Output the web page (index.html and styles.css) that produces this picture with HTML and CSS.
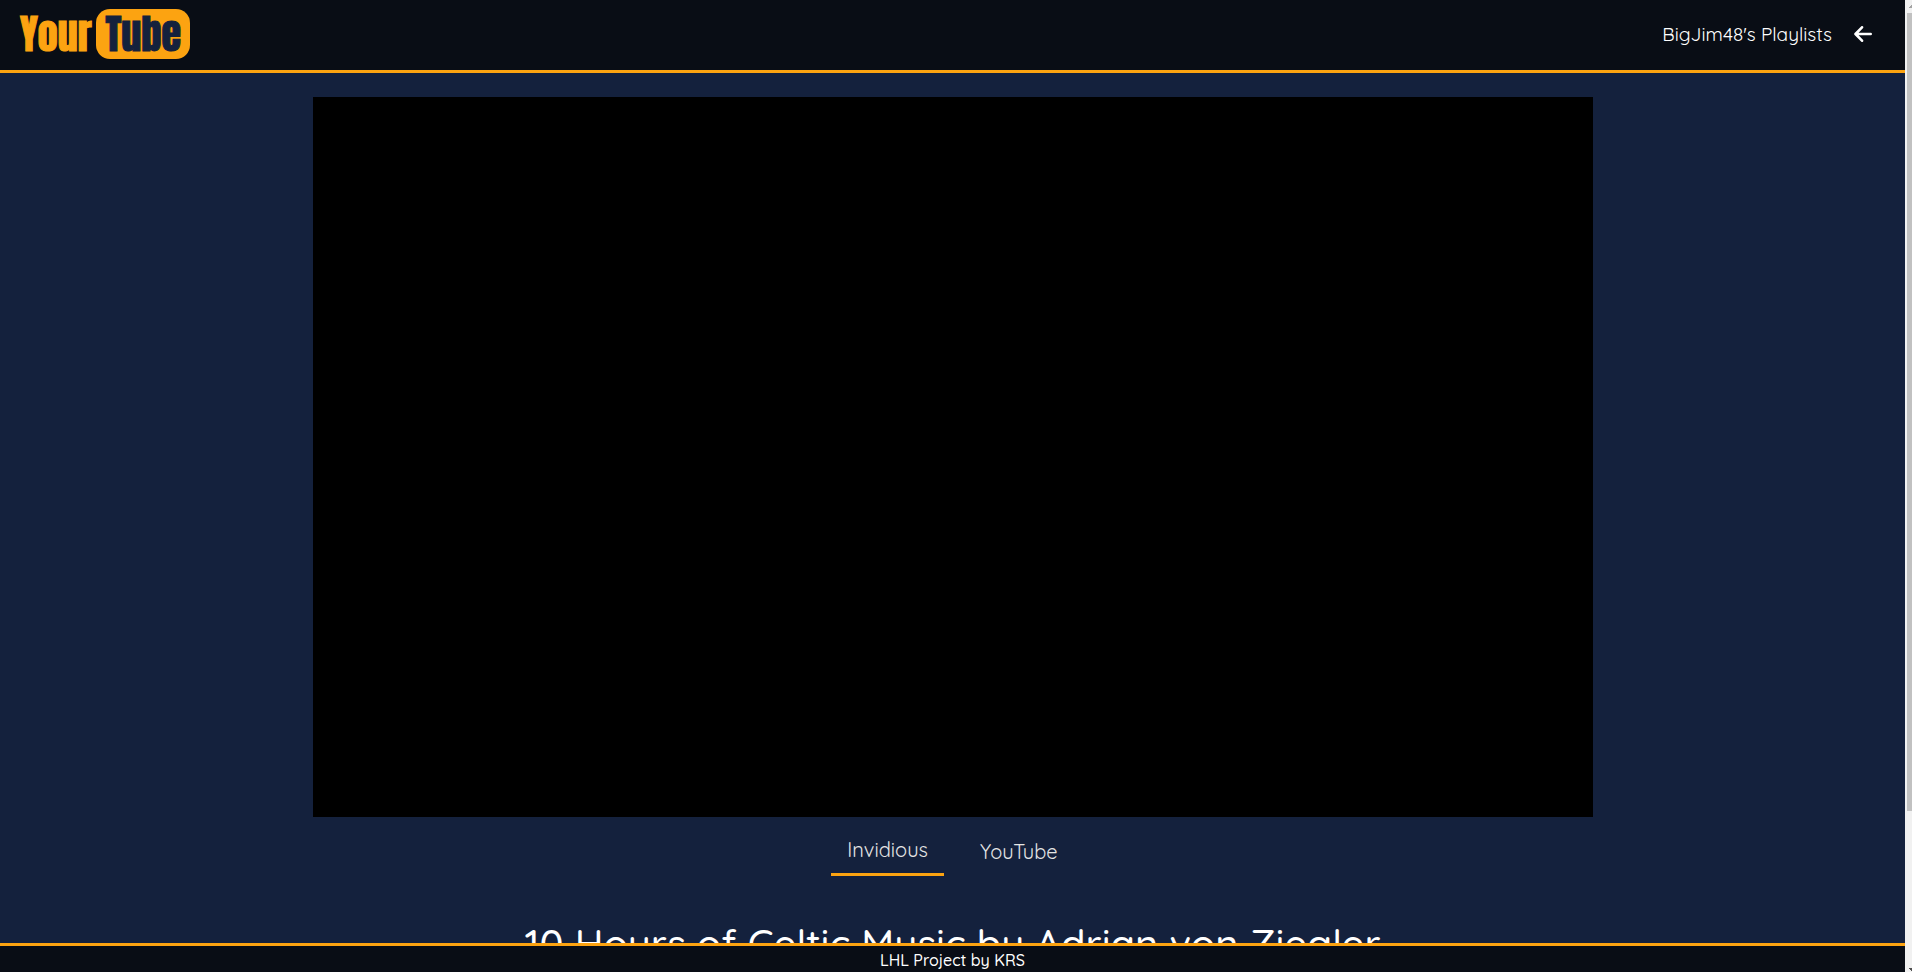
FILE: index.html
```html
<!DOCTYPE html>
<html lang="en">
<head>
  <meta charset="utf-8">
  <meta name="viewport" content="width=device-width, initial-scale=1">
  <title>YourTube</title>
  <link rel="stylesheet" href="styles.css">
</head>
<body>
  <div class="app">
    <header class="topbar">
      <a class="logo" href="#" aria-label="YourTube home"><span class="logo-your">Your</span><span class="logo-tube">Tube</span></a>
      <nav class="topnav">
        <a class="playlists" href="#">BigJim48's Playlists</a>
        <a class="back" href="#" aria-label="Back">
          <svg viewBox="0 0 18 16" width="18" height="16" aria-hidden="true"><path d="M8 1.3 1.5 8 8 14.7M2 8h14.7" fill="none" stroke="currentColor" stroke-width="2.6" stroke-linecap="round" stroke-linejoin="round"/></svg>
        </a>
      </nav>
    </header>
    <main class="content">
      <div class="player"></div>
      <div class="tabs">
        <button class="tab tab-active" type="button">Invidious</button>
        <button class="tab" type="button">YouTube</button>
      </div>
      <h1 class="title">10 Hours of Celtic Music by Adrian von Ziegler</h1>
    </main>
    <footer class="footer">LHL Project by KRS</footer>
  </div>
  <div class="scrollbar" aria-hidden="true">
    <svg class="arrow" viewBox="0 0 5 13" width="5" height="13"><path d="M2 8V7h1V6h1V5h1v3z" fill="#a3a3a3"/></svg>
    <div class="thumb"></div>
    <div class="track"></div>
    <svg class="arrow" viewBox="0 0 5 13" width="5" height="13"><path d="M2 9h3v3H4v-1H3v-1H2z" fill="#505050"/></svg>
  </div>
</body>
</html>
```
FILE: styles.css
```css
* {
  box-sizing: border-box;
}

body {
  display: flex;
  height: 100vh;
  margin: 0;
  overflow: hidden;
  background: #14213d;
  color: #fff;
  font-family: Quicksand, Lato, sans-serif;
  font-weight: 500;
}

a {
  color: inherit;
  text-decoration: none;
}

.app {
  display: flex;
  flex: 1;
  flex-direction: column;
  min-width: 0;
}

.topbar {
  display: flex;
  flex: none;
  align-items: center;
  justify-content: space-between;
  padding: 9px 33px 11px 20px;
  border-bottom: 3px solid #fca311;
  background: #090d15;
}

.logo {
  display: flex;
  align-items: center;
  gap: 4px;
  font: 400 40px/50px Impact, Anton, "Open Sans Condensed", sans-serif;
}

.logo-your {
  color: #fca311;
  -webkit-text-stroke: 1px #fca311;
}

.logo-tube {
  padding: 0 9px 0 10px;
  border-radius: 14px;
  background: #fca311;
  color: #14213d;
  -webkit-text-stroke: 1px #14213d;
}

.topnav {
  display: flex;
  align-items: center;
  gap: 22px;
  font-size: 19px;
  font-weight: 400;
  line-height: 24px;
}

.back {
  display: flex;
}

.content {
  display: flex;
  flex: 1;
  flex-direction: column;
  align-items: center;
  min-height: 0;
  padding-top: 24px;
  overflow: hidden;
}

.player {
  flex: none;
  width: 100%;
  max-width: 1280px;
  aspect-ratio: 16 / 9;
  background: #000;
}

.tabs {
  display: flex;
  flex: none;
  align-items: center;
  gap: 20px;
  margin-top: 16px;
}

.tab {
  padding: 5px 16px 11px;
  border: 0;
  background: none;
  color: #e5e5e5;
  font: 400 20px/24px Quicksand, Lato, sans-serif;
}

.tab-active {
  padding-bottom: 11px;
  border-bottom: 3px solid #fca311;
}

.title {
  flex: none;
  margin: 42px 0 0;
  font-size: 40px;
  font-weight: 500;
  line-height: 50px;
  white-space: nowrap;
}

.footer {
  flex: none;
  padding-top: 2px;
  border-top: 3px solid #fca311;
  background: #090d15;
  font-size: 16px;
  line-height: 24px;
  text-align: center;
}

.scrollbar {
  display: flex;
  flex: none;
  flex-direction: column;
  width: 7px;
  padding-left: 2px;
  background: #f1f1f1;
}

.arrow {
  flex: none;
}

.thumb {
  flex: 798;
  background: #c1c1c1;
}

.track {
  flex: 148;
}
```
